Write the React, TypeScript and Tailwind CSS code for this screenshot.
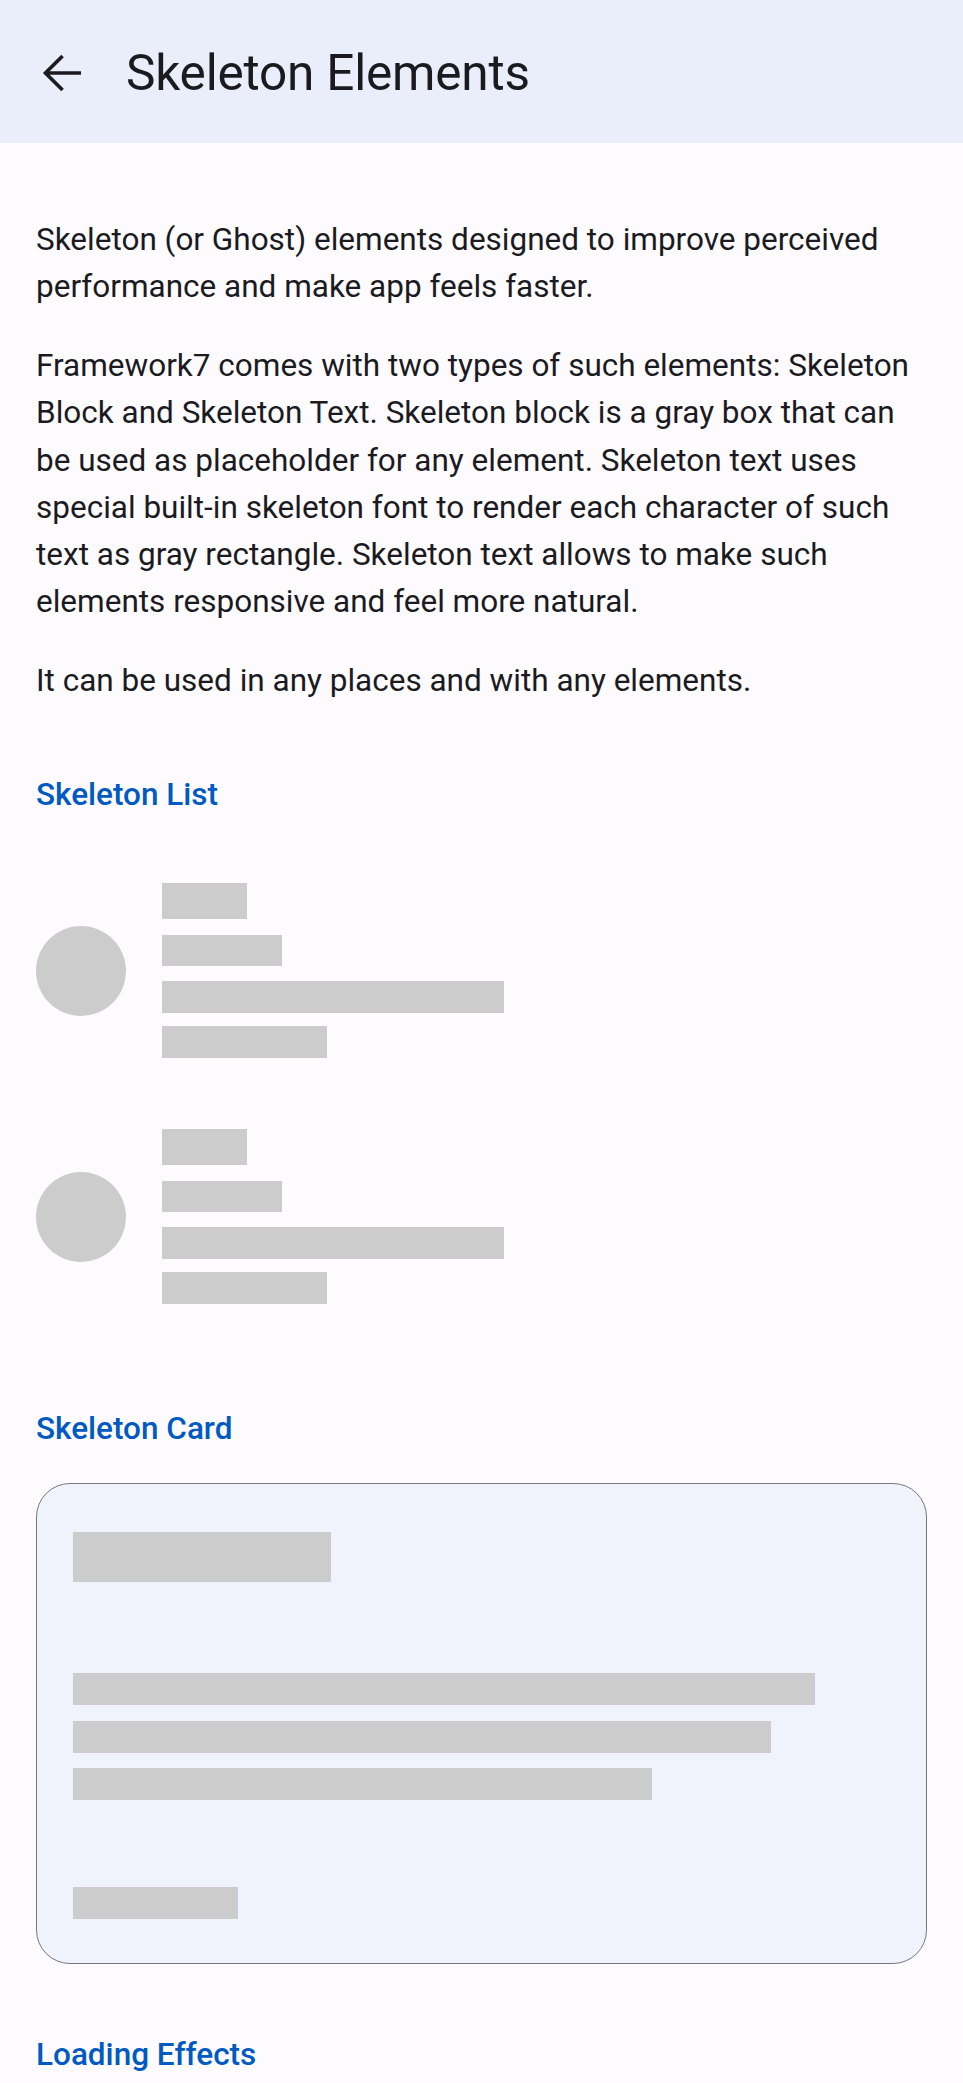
const paragraphs = [
  "Skeleton (or Ghost) elements designed to improve perceived performance and make app feels faster.",
  "Framework7 comes with two types of such elements: Skeleton Block and Skeleton Text. Skeleton block is a gray box that can be used as placeholder for any element. Skeleton text uses special built-in skeleton font to render each character of such text as gray rectangle. Skeleton text allows to make such elements responsive and feel more natural.",
  "It can be used in any places and with any elements.",
];

function BlockTitle({ children, className = "" }: { children: string; className?: string }) {
  return (
    <h2 className={`px-[36px] text-[31.5px] leading-[36px] font-medium text-[#005ac1] ${className}`}>
      {children}
    </h2>
  );
}

function SkeletonItem({ className = "" }: { className?: string }) {
  return (
    <div className={`flex items-center px-[36px] ${className}`}>
      <div className="w-[90px] h-[90px] rounded-full bg-[#cccccc] shrink-0" />
      <div className="ml-[36px] flex flex-col">
        <div className="w-[85px] h-[36px] bg-[#cccccc]" />
        <div className="mt-[16px] w-[120px] h-[31px] bg-[#cccccc]" />
        <div className="mt-[15px] w-[342px] h-[32px] bg-[#cccccc]" />
        <div className="mt-[13px] w-[165px] h-[32px] bg-[#cccccc]" />
      </div>
    </div>
  );
}

export default function App() {
  return (
    <div
      className="min-h-screen bg-[#fefbff] text-[#1b1b1f]"
      style={{ fontFamily: "Roboto, 'Noto Sans', sans-serif" }}
    >
      {/* Navbar */}
      <header className="h-[143px] bg-[#eaeefa] flex items-center">
        <button className="ml-[36px] mt-[3px] w-[54px] h-[54px] flex items-center justify-center">
          <svg width="54" height="54" viewBox="0 0 24 24" fill="none" stroke="#1b1b1f" strokeWidth="1.6">
            <path d="M20 12H4.6" />
            <path d="M11.8 4.4L4.2 12l7.6 7.6" strokeLinejoin="miter" />
          </svg>
        </button>
        <h1 className="ml-[36px] mt-[5px] text-[49.5px] leading-none font-normal tracking-[-0.2px]">Skeleton Elements</h1>
      </header>

      {/* Intro */}
      <div className="px-[36px] pt-[73px] text-[31.5px] leading-[47.25px]">
        {paragraphs.map((p, i) => (
          <p key={i} className={i > 0 ? "mt-[31.5px]" : ""}>
            {p}
          </p>
        ))}
      </div>

      <BlockTitle className="mt-[73px]">Skeleton List</BlockTitle>
      <SkeletonItem className="mt-[70px]" />
      <SkeletonItem className="mt-[71px]" />

      <BlockTitle className="mt-[107px]">Skeleton Card</BlockTitle>
      <div className="mx-[36px] mt-[36px] h-[481px] rounded-[34px] border border-[#74777f] bg-[#f1f3fc] px-[36px] pt-[48px]">
        <div className="w-[258px] h-[50px] bg-[#cccccc]" />
        <div className="mt-[91px] flex flex-col gap-[15.5px]">
          <div className="w-[742px] h-[32px] bg-[#cccccc]" />
          <div className="w-[698px] h-[32px] bg-[#cccccc]" />
          <div className="w-[579px] h-[32px] bg-[#cccccc]" />
        </div>
        <div className="mt-[87px] w-[165px] h-[31.5px] bg-[#cccccc]" />
      </div>

      <BlockTitle className="mt-[73px] pb-[40px]">Loading Effects</BlockTitle>
    </div>
  );
}
